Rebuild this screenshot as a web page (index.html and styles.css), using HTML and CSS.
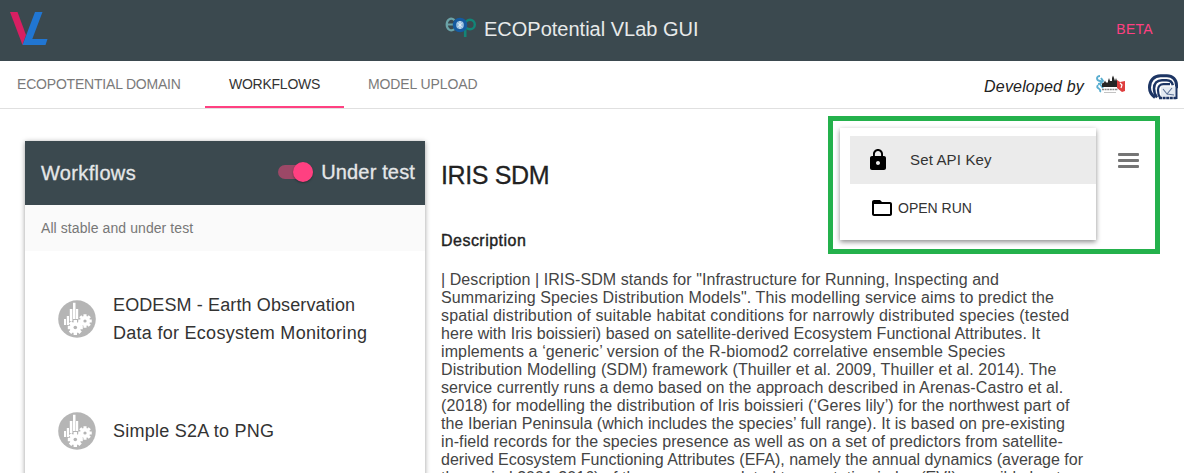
FILE: index.html
```html
<!DOCTYPE html>
<html lang="en">
<head>
<meta charset="utf-8">
<title>ECOPotential VLab GUI</title>
<link rel="stylesheet" href="styles.css">
</head>
<body>
<header class="topbar">
  <svg class="vl-logo" width="38" height="34" viewBox="0 0 38 34"><path d="M0 0h7.500l8.500 23-3.500 10z" fill="#d81f62"/><path d="M25 0h7.500L22.300 27H37.500l-2 6H12.500z" fill="#2176d2"/></svg>
  <div class="brand">
    <svg class="eco-logo" width="31" height="20" viewBox="0 0 31 20" fill="none"><path d="M9.500 3.200C5.500-.3 1.700 3 1.700 7.500S5.500 15 9.500 12.200M2 7.500H8.500" stroke="#6ba3a8" stroke-width="2.200"/><circle cx="25" cy="7.500" r="4.800" stroke="#128577" stroke-width="2.400"/><path d="M20.200 8v12" stroke="#128577" stroke-width="2.600"/><circle cx="15" cy="8" r="5.800" fill="#2a62a0" stroke="#155aa0" stroke-width="3"/><circle cx="15" cy="8" r="3.900" fill="#8fb8dc"/><path d="M12.500 6l5 4M17.500 6l-5 4M15 4v8" stroke="#e5f0f7" stroke-width=".9"/></svg>
    <span class="brand-name">ECOPotential VLab GUI</span>
  </div>
  <span class="beta">BETA</span>
</header>
<nav class="tabs">
  <a class="tab tab-domain"><span>ECOPOTENTIAL DOMAIN</span></a>
  <a class="tab tab-workflows active"><span>WORKFLOWS</span></a>
  <a class="tab tab-upload"><span>MODEL UPLOAD</span></a>
  <div class="credits">
    <span class="dev">Developed by</span>
    <svg class="org-one" width="30" height="20" viewBox="0 0 30 20"><path d="M4 1c-4 0-4 4 0 5 3 1 1 3-2 3M2 10c-3 4 4 3 2 7M5 3l2 3-3 3 3 4" fill="none" stroke="#5aaed0" stroke-width="1.900"/><path d="M6 12V8.500l2-1 1-2 1 2h2V6l1-3 1 3h2V3l1-2.500L18 3l1 3 1-3 1 3v6z" fill="#252525"/><path d="M21 5l3 2 5-1v10l-3 1-5-4z" fill="#df3e3e"/><path d="M24 8l2 2-1 3" fill="none" stroke="#fff" stroke-width="1.200"/><path d="M6 14.500h16" stroke="#8a8a8a" stroke-width="1.600" stroke-dasharray="2 .6"/><path d="M8 17.500h12" stroke="#c3c3c3"/></svg>
    <svg class="org-two" width="30" height="26" viewBox="0 0 30 26" fill="none"><g stroke="#1d3564"><path d="M7 23.500C3.500 21 1.500 17.500 1.500 13.500 1.500 6.500 6 1.700 12.500 1.700H19c5.500 0 9.500 4 9.500 9.500v3" stroke-width="3"/><path d="M9 23.500C7 21 6 18 6 14.500 6 9.300 9 6.200 14 6.200h4.500c3.500 0 5.800 2 6.300 5" stroke-width="2.500"/><path d="M12 23.500c-1.500-2-2-4.500-2-7.500 0-3.800 2-5.800 5.500-5.800H22" stroke-width="2.200"/></g><path d="M13 12.500h15v10H13z" fill="#e4eaf2"/><path d="M28.500 11v14" stroke="#1d3564" stroke-width="2"/><path d="M11 24h18" stroke="#1d3564" stroke-width="2.400" stroke-dasharray="3 .6"/><path d="M15 15l4 5 5-6M19 20l7 1" stroke="#5c7297" stroke-width="1.100"/></svg>
  </div>
</nav>
<main class="content">
  <section class="panel">
    <div class="panel-head">
      <h2>Workflows</h2>
      <span class="switch"><i></i></span>
      <span class="under">Under test</span>
    </div>
    <div class="sub"><span>All stable and under test</span></div>
    <div class="item">
      <svg class="avatar" width="38" height="38" viewBox="0 0 38 38"><defs><g id="gear"><circle r="5.500"/><path d="M-1.700-7.500h3.400v15h-3.400zM-7.500-1.700h15v3.400h-15z"/><path d="M-1.700-7.500h3.400v15h-3.400zM-7.500-1.700h15v3.400h-15z" transform="rotate(45)"/><circle r="1.800" fill="#b5b5b5"/></g></defs><circle cx="19" cy="19" r="18.800" fill="#b5b5b5"/><g fill="#fff"><path d="M6 19h2v6H6zM8.800 16h2.200v9H8.800zM11.800 9h2.600v12h-2.600zM15 2.800h2.500V19H15zM18 9h2.200v10H18z"/><use href="#gear" transform="translate(17.300 27.500)"/><use href="#gear" transform="translate(27 21) scale(.9)"/></g></svg>
      <div class="item-name"><span class="n1">EODESM - Earth Observation</span><span class="n2">Data for Ecosystem Monitoring</span></div>
    </div>
    <div class="item">
      <svg class="avatar" width="38" height="38" viewBox="0 0 38 38"><circle cx="19" cy="19" r="18.800" fill="#b5b5b5"/><g fill="#fff"><path d="M6 19h2v6H6zM8.800 16h2.200v9H8.800zM11.800 9h2.600v12h-2.600zM15 2.800h2.500V19H15zM18 9h2.200v10H18z"/><use href="#gear" transform="translate(17.300 27.500)"/><use href="#gear" transform="translate(27 21) scale(.9)"/></g></svg>
      <div class="item-name"><span class="n3">Simple S2A to PNG</span></div>
    </div>
  </section>
  <article class="detail">
    <h1><span>IRIS SDM</span></h1>
    <h3><span>Description</span></h3>
    <p class="desc">
      <span class="l1">| Description | IRIS-SDM stands for "Infrastructure for Running, Inspecting and</span>
      <span class="l2">Summarizing Species Distribution Models". This modelling service aims to predict the</span>
      <span class="l3">spatial distribution of suitable habitat conditions for narrowly distributed species (tested</span>
      <span class="l4">here with Iris boissieri) based on satellite-derived Ecosystem Functional Attributes. It</span>
      <span class="l5">implements a ‘generic’ version of the R-biomod2 correlative ensemble Species</span>
      <span class="l6">Distribution Modelling (SDM) framework (Thuiller et al. 2009, Thuiller et al. 2014). The</span>
      <span class="l7">service currently runs a demo based on the approach described in Arenas-Castro et al.</span>
      <span class="l8">(2018) for modelling the distribution of Iris boissieri (‘Geres lily’) for the northwest part of</span>
      <span class="l9">the Iberian Peninsula (which includes the species’ full range). It is based on pre-existing</span>
      <span class="l10">in-field records for the species presence as well as on a set of predictors from satellite-</span>
      <span class="l11">derived Ecosystem Functioning Attributes (EFA), namely the annual dynamics (average for</span>
      <span class="l12">the period 2001-2016) of the processes related to vegetation index (EVI), sensible heat</span>
    </p>
  </article>
</main>
<div class="callout">
  <div class="menu">
    <div class="menu-item selected">
      <svg width="24" height="24" viewBox="0 0 24 24"><path d="M18 8h-1V6c0-2.760-2.240-5-5-5S7 3.240 7 6v2H6c-1.100 0-2 .9-2 2v10c0 1.100.9 2 2 2h12c1.100 0 2-.9 2-2V10c0-1.100-.9-2-2-2zm-6 9c-1.100 0-2-.9-2-2s.9-2 2-2 2 .9 2 2-.9 2-2 2zm3.100-9H8.900V6c0-1.710 1.390-3.100 3.100-3.100s3.100 1.390 3.100 3.100v2z"/></svg>
      <span class="set-key">Set API Key</span>
    </div>
    <div class="menu-item open-run">
      <svg width="24" height="24" viewBox="0 0 24 24"><path d="M20 6h-8l-2-2H4c-1.100 0-2 .9-2 2v12c0 1.100.9 2 2 2h16c1.100 0 2-.9 2-2V8c0-1.100-.9-2-2-2zm0 12H4V8h16v10z"/></svg>
      <span class="run">OPEN RUN</span>
    </div>
  </div>
  <div class="burger"><i></i><i></i><i></i></div>
</div>
</body>
</html>
```
FILE: styles.css
```css
* { box-sizing: border-box; }
body { margin: 0; width: 1184px; height: 473px; overflow: hidden; background: #fff; color: #333; font-family: "Liberation Sans", Arial, sans-serif; position: relative; }
span { white-space: nowrap; }
svg { display: block; flex: none; }
.topbar { height: 61px; background: #3b494f; display: flex; align-items: flex-start; padding: 12px 31px 0 10px; }
.brand { display: flex; margin-left: 397px; padding-top: 5px; }
.brand-name { margin-left: 8px; font-size: 20px; line-height: 24px; color: #e8eaea; }
.beta { margin-left: auto; color: #ff4081; font-size: 14px; line-height: 34px; letter-spacing: .3px; }
.tabs { height: 48px; border-bottom: 1px solid #e0e0e0; display: flex; color: #7a7a7a; font-size: 14px; line-height: 46px; }
.tab-domain { width: 205px; padding-left: 17px; letter-spacing: -.2px; }
.tab-workflows { width: 139px; padding-left: 24px; letter-spacing: -.25px; }
.tab-upload { padding-left: 24px; letter-spacing: -.1px; }
.tab.active { color: #333; border-bottom: 2px solid #ff4081; }
.credits { margin-left: auto; display: flex; padding-right: 6px; align-items: flex-start; }
.dev { font-size: 16px; font-style: italic; color: #222; line-height: 51px; letter-spacing: .17px; }
.org-one { margin: 14px 0 0 12px; }
.org-two { margin: 13px 0 0 22px; }
.content { display: flex; height: 364px; overflow: hidden; }
.panel { width: 400px; height: 390px; margin: 32px 0 0 25px; box-shadow: 0 1px 5px rgba(0,0,0,.4); background: #fff; flex: none; }
.panel-head { height: 64px; background: #3b494f; color: #e5e7e8; display: flex; align-items: center; padding: 0 10px 0 16px; font-size: 20px; }
.panel-head h2 { margin: 0; font-size: 20px; font-weight: 400; letter-spacing: .35px; -webkit-text-stroke: .3px; }
.under { margin-left: 8px; letter-spacing: .15px; margin-top: -2px; -webkit-text-stroke: .3px; }
.switch { margin-left: auto; margin-top: -2px; width: 35px; height: 14px; border-radius: 7px; background: #9c4867; display: flex; align-items: center; justify-content: flex-end; }
.switch i { width: 20px; height: 20px; flex: none; border-radius: 50%; background: #ff4081; box-shadow: 0 1px 2px rgba(0,0,0,.35); }
.sub { height: 46px; background: #fafafa; color: #777; font-size: 14px; line-height: 47px; padding-left: 16px; letter-spacing: .08px; }
.item { height: 112px; padding-left: 33px; display: flex; align-items: center; margin-top: 12px; }
.item + .item { margin-top: 0; }
.item-name { margin-left: 17px; font-size: 18px; line-height: 28px; color: #333; }
.item-name span { display: block; }
.n1 { letter-spacing: .12px; }
.n2 { letter-spacing: .28px; }
.n3 { letter-spacing: .25px; }
.detail { padding: 49px 0 0 16px; }
.detail h1 { margin: 0; font-size: 25px; line-height: 34px; font-weight: 400; letter-spacing: -.38px; color: #222; -webkit-text-stroke: .3px; }
.detail h3 { margin: 39px 0 0; font-size: 16px; line-height: 20px; font-weight: 400; letter-spacing: .48px; color: #222; -webkit-text-stroke: .4px; }
.desc { margin: 20px 0 0; font-size: 16px; line-height: 18px; color: #444; }
.desc span { display: block; }
.l1 { letter-spacing: .065px; }
.l2 { letter-spacing: .12px; }
.l3 { letter-spacing: .17px; }
.l4 { letter-spacing: .04px; }
.l5 { letter-spacing: .12px; }
.l6 { letter-spacing: .11px; }
.l7 { letter-spacing: .09px; }
.l8 { letter-spacing: .09px; }
.l9 { letter-spacing: .05px; }
.l10 { letter-spacing: .1px; }
.l11 { letter-spacing: .01px; }
.l12 { letter-spacing: .05px; }
.callout { position: absolute; left: 828px; top: 116px; width: 332px; height: 138px; border: 5px solid #24b14c; display: flex; }
.menu { width: 256px; height: 112px; margin: 7px 0 0 7px; padding: 8px 0 0 10px; box-shadow: 0 2px 5px rgba(0,0,0,.45); }
.menu-item { height: 48px; display: flex; align-items: center; color: #333; font-size: 15px; }
.selected { background: #ebebeb; padding-left: 16px; }
.set-key { margin: -2px 0 0 20px; letter-spacing: .15px; }
.open-run { padding-left: 20px; font-size: 14px; }
.run { margin-left: 4px; }
.burger { width: 21px; margin: 32px 0 0 22px; display: flex; flex-direction: column; gap: 3px; }
.burger i { height: 3px; border-radius: 1px; background: #757575; }
```
